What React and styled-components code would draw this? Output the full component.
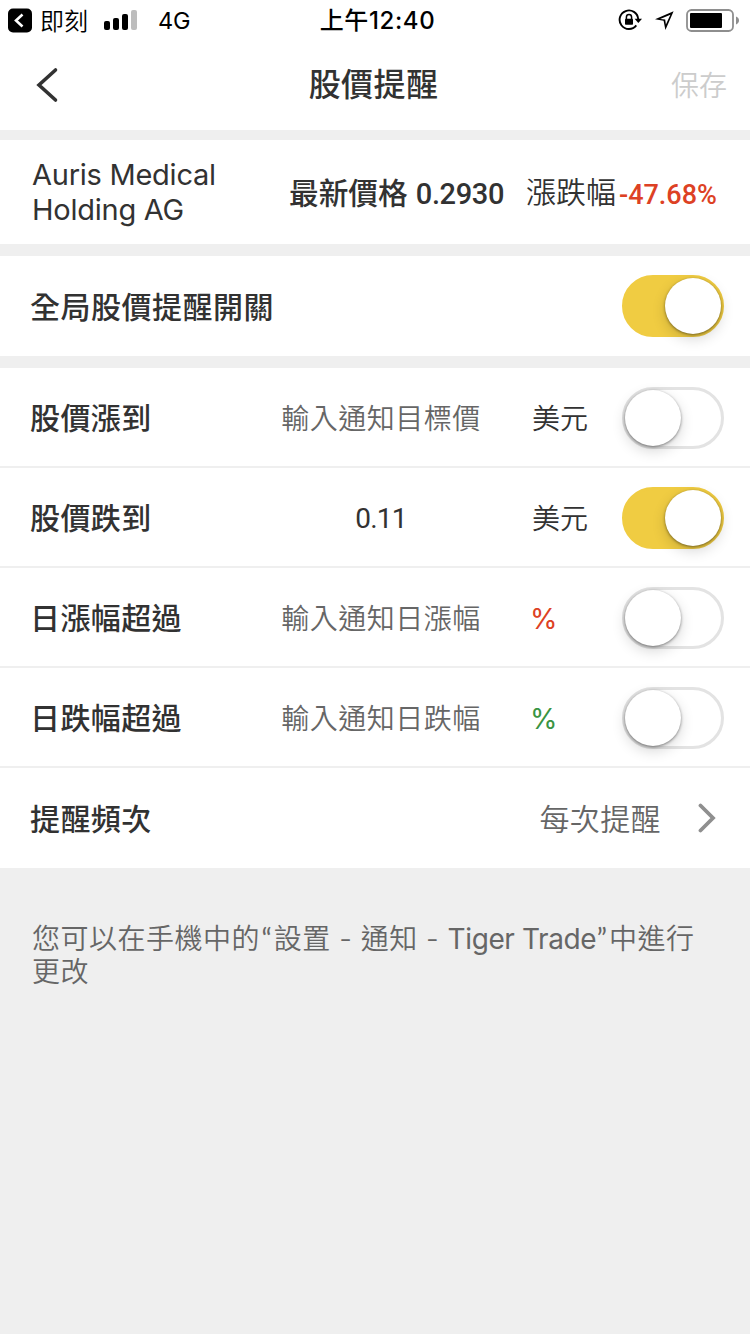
import React from 'react';
import styled, { createGlobalStyle } from 'styled-components';

const colors = {
  white: '#ffffff',
  grey: '#efefef',
  dark: '#323232',
  text: '#666666',
  disabled: '#cccccc',
  yellow: '#f0cc42',
  red: '#dd4124',
  green: '#3a9443',
};

const fonts = {
  main: 'Inter, "Noto Sans CJK TC", sans-serif',
  cjk: '"Noto Sans CJK TC", sans-serif',
  number: 'Roboto, "Noto Sans CJK TC", sans-serif',
};

const GlobalStyle = createGlobalStyle`
  body {
    margin: 0;
    background-color: ${colors.grey};
  }

  * {
    box-sizing: border-box;
  }
`;

const Container = styled.div`
  width: 750px;
  min-height: 1334px;
  background-color: ${colors.grey};
  color: ${colors.dark};
  font-family: ${fonts.main};
  white-space: nowrap;
  overflow: hidden;

  & svg {
    display: block;
    flex: none;
  }
`;

const StatusBar = styled.div`
  display: grid;
  grid-template-columns: 1fr auto 1fr;
  align-items: center;
  height: 40px;
  padding: 0 10px 0 8px;
  background-color: ${colors.white};
  color: #000;
`;

const StatusLeft = styled.div`
  display: flex;
  align-items: center;
`;

const StatusRight = styled.div`
  display: flex;
  align-items: center;
  justify-content: flex-end;
`;

const BackApp = styled.span`
  margin: 0 16px 0 8px;
  font: 350 24px/38px ${fonts.cjk};
`;

const Network = styled.span`
  margin-left: 21px;
  padding-top: 1px;
  font-size: 23.5px;
  line-height: 38px;
  letter-spacing: -0.2px;
`;

const Time = styled.span`
  padding: 2px 0 0 7px;
  font-size: 24px;
  font-weight: 500;
  line-height: 38px;
  letter-spacing: 0.6px;
`;

const NavBar = styled.div`
  display: grid;
  grid-template-columns: 1fr auto 1fr;
  align-items: center;
  height: 90px;
  padding: 0 23px 0 35px;
  background-color: ${colors.white};
`;

const Title = styled.h1`
  margin: 0;
  padding: 0 15px 5px 0;
  font: 500 32px/85px ${fonts.cjk};
  letter-spacing: 0.4px;
`;

const Save = styled.span`
  justify-self: end;
  padding-bottom: 2px;
  color: ${colors.disabled};
  font: 350 28px/88px ${fonts.cjk};
`;

const Quote = styled.div`
  display: flex;
  align-items: center;
  height: 104px;
  margin-top: 10px;
  padding-left: 32px;
  background-color: ${colors.white};
`;

const StockName = styled.div`
  width: 257px;
  font-size: 29px;
  line-height: 35px;
  letter-spacing: -0.25px;
`;

const Price = styled.div`
  display: flex;
  width: 237px;
  font: 500 29.7px/60px ${fonts.cjk};
`;

const Change = styled.div`
  display: flex;
  font: 350 30px/58px ${fonts.cjk};
`;

const Figure = styled.span`
  margin-left: ${props => props.$gap}px;
  padding-top: ${props => props.$drop || 0}px;
  color: ${props => props.color || 'inherit'};
  font-family: ${fonts.number};
  font-size: ${props => props.$size}px;
  font-weight: 500;
  line-height: 56px;
  letter-spacing: ${props => props.$spacing || 0}px;
`;

const Section = styled.div`
  margin-top: 12px;
`;

const Row = styled.div`
  display: flex;
  align-items: center;
  height: 100px;
  padding: 0 26px 0 30px;
  background-color: ${colors.white};
  border-bottom: ${props => (props.$line ? `2px solid ${colors.grey}` : 'none')};
`;

const Label = styled.div`
  flex: 1;
  padding-bottom: 2px;
  font: 500 30px/58px ${fonts.cjk};
  letter-spacing: ${props => props.$spacing || 0.4}px;
`;

const Field = styled.div`
  width: 202px;
  margin-right: 50px;
  padding-top: ${props => (props.$filled ? '4px' : '0')};
  color: ${props => (props.$filled ? colors.dark : colors.text)};
  font: ${props => (props.$filled ? 400 : 350)} 28px/58px ${props => (props.$filled ? fonts.number : fonts.cjk)};
  letter-spacing: ${props => (props.$filled ? '-0.8px' : '0.5px')};
  text-align: center;
`;

const Unit = styled.div`
  width: 90px;
  padding-top: ${props => (props.color ? '4px' : '0')};
  color: ${props => props.color || colors.dark};
  font: ${props => (props.color ? 400 : 350)} 28px/58px ${props => (props.color ? fonts.main : fonts.cjk)};
  text-indent: ${props => (props.color ? '-2px' : '0')};
`;

const Switch = styled.div`
  display: flex;
  align-items: center;
  justify-content: ${props => (props.$on ? 'flex-end' : 'flex-start')};
  width: 102px;
  height: 62px;
  margin-top: ${props => (props.$line ? '2px' : '0')};
  border: 3px solid ${props => (props.$on ? colors.yellow : '#e3e3e3')};
  border-radius: 31px;
  background-color: ${props => (props.$on ? colors.yellow : colors.white)};
`;

const Knob = styled.div`
  width: 56px;
  height: 56px;
  border-radius: 50%;
  background-color: ${colors.white};
  box-shadow: 0 1px 3px rgba(0, 0, 0, 0.45), 0 5px 14px rgba(0, 0, 0, 0.16);
`;

const Frequency = styled.div`
  margin-right: 37px;
  padding-bottom: 2px;
  color: ${colors.text};
  font: 350 30px/58px ${fonts.cjk};
  letter-spacing: 0.4px;
`;

const Hint = styled.p`
  margin: 0;
  padding: 54px 32px;
  color: ${colors.text};
  font: 350 28px/33px ${fonts.main};
  letter-spacing: 0.5px;
`;

const Latin = styled.span`
  font-weight: 400;
  letter-spacing: -0.4px;
`;

const Mark = styled.span`
  margin-left: ${props => props.$gap}px;
  font-family: Lato, ${fonts.cjk};
  font-weight: 400;
  letter-spacing: 2px;
`;

const alerts = [
  { label: '股價漲到', placeholder: '輸入通知目標價', unit: '美元' },
  { label: '股價跌到', value: '0.11', unit: '美元', on: true },
  { label: '日漲幅超過', placeholder: '輸入通知日漲幅', unit: '%', color: colors.red },
  { label: '日跌幅超過', placeholder: '輸入通知日跌幅', unit: '%', color: colors.green },
];

function Toggle({ on, line }) {
  return (
    <Switch $on={on} $line={line}>
      <Knob />
    </Switch>
  );
}

function BackBadge() {
  return (
    <svg width="24" height="26" viewBox="0 -1 24 26">
      <rect width="24" height="24" y="0.5" rx="5" />
      <path d="M14.5 6.5L8 12.5l6.5 6" fill="none" stroke="#fff" strokeWidth="2.6" />
    </svg>
  );
}

function Signal() {
  return (
    <svg width="33" height="20" viewBox="0 0 33 20">
      <rect x="0" y="11" width="6" height="9" rx="2" />
      <rect x="9" y="8" width="6" height="12" rx="2" />
      <rect x="18" y="4" width="6" height="16" rx="2" />
      <rect x="27" y="0" width="6" height="20" rx="2" fill="#bdbdbd" />
    </svg>
  );
}

function StatusIcons() {
  return (
    <svg width="122" height="40" viewBox="0 0 122 40">
      {/* rotation lock */}
      <path d="M18.3 25.4A9.3 9.3 0 1 1 20.2 19" fill="none" stroke="#000" strokeWidth="1.9" />
      <path d="M16.6 18.8h7.4l-3.7 4.2z" />
      <rect x="7" y="18.8" width="8" height="6" rx="0.8" />
      <path d="M8.4 19v-1.8a2.6 2.6 0 0 1 5.2 0V19" fill="none" stroke="#000" strokeWidth="1.5" />
      {/* location */}
      <path d="M55.6 11.2L47.4 30l-1.8-9.2-8.6-1.600z M52.400 14.800L42.200 19l5 0.600 0.700 4.800z" fillRule="evenodd" />
      {/* battery */}
      <rect x="69" y="10" width="46" height="21" rx="4.5" fill="none" stroke="#8e8e8e" strokeWidth="1.8" />
      <rect x="72" y="13" width="32" height="15" rx="1" />
      <path d="M118 16.5c2 .8 3 2.2 3 4s-1 3.2-3 4z" fill="#8e8e8e" />
    </svg>
  );
}

function App() {
  return (
    <Container>
      <GlobalStyle />
      <StatusBar>
        <StatusLeft>
          <BackBadge />
          <BackApp>即刻</BackApp>
          <Signal />
          <Network>4G</Network>
        </StatusLeft>
        <Time>上午12:40</Time>
        <StatusRight>
          <StatusIcons />
        </StatusRight>
      </StatusBar>
      <NavBar>
        <svg width="24" height="36" viewBox="0 0 24 36">
          <path d="M20.5 3L4 18l16.5 15" fill="none" stroke={colors.dark} strokeWidth="3.6" strokeLinecap="round" />
        </svg>
        <Title>股價提醒</Title>
        <Save>保存</Save>
      </NavBar>
      <Quote>
        <StockName>
          Auris Medical<br />
          Holding AG
        </StockName>
        <Price>
          最新價格
          <Figure $size={29} $spacing={-0.35} $gap={8} $drop={4}>0.2930</Figure>
        </Price>
        <Change>
          漲跌幅
          <Figure color={colors.red} $size={27} $gap={3} $drop={6}>-47.68%</Figure>
        </Change>
      </Quote>
      <Section>
        <Row>
          <Label $spacing={0.5}>全局股價提醒開關</Label>
          <Toggle on />
        </Row>
      </Section>
      <Section>
        {alerts.map(({ label, placeholder, value, unit, color, on }) => (
          <Row key={label} $line>
            <Label>{label}</Label>
            <Field $filled={Boolean(value)}>{value || placeholder}</Field>
            <Unit color={color}>{unit}</Unit>
            <Toggle on={on} line />
          </Row>
        ))}
        <Row>
          <Label>提醒頻次</Label>
          <Frequency>每次提醒</Frequency>
          <svg width="26" height="32" viewBox="0 0 26 32">
            <path d="M2.5 3.5L15 16 2.5 28.5" fill="none" stroke="#8f8f8f" strokeWidth="3.8" strokeLinecap="round" />
          </svg>
        </Row>
      </Section>
      <Hint>
        您可以在手機中的<Mark $gap={1.5}>“</Mark>設置 - 通知 - <Latin>Tiger Trade</Latin><Mark $gap={0.5}>”</Mark>中進行<br />
        更改
      </Hint>
    </Container>
  );
}

export default App;
